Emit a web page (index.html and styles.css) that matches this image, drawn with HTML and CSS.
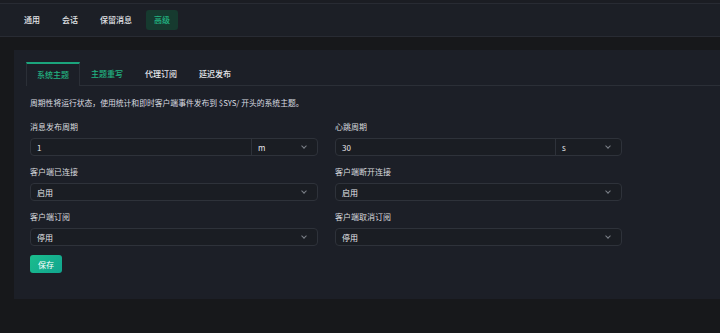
FILE: index.html
```html
<!DOCTYPE html>
<html lang="zh-CN">
<head>
  <meta charset="UTF-8">
  <meta name="viewport" content="width=device-width, initial-scale=1.0">
  <title>高级设置</title>
  <link rel="stylesheet" href="styles.css">
</head>
<body>
  <div class="top-strip"></div>
  <nav class="main-nav">
    <a class="nav-item">通用</a>
    <a class="nav-item">会话</a>
    <a class="nav-item">保留消息</a>
    <a class="nav-item active">高级</a>
  </nav>

  <div class="panel">
    <div class="tabs">
      <div class="tab active">系统主题</div>
      <div class="tab hover">主题重写</div>
      <div class="tab">代理订阅</div>
      <div class="tab">延迟发布</div>
      <div class="tab-rest"></div>
    </div>

    <div class="panel-body">
      <p class="desc">周期性将运行状态，使用统计和即时客户端事件发布到 $SYS/ 开头的系统主题。</p>

      <div class="form-grid">
        <div class="field">
          <label>消息发布周期</label>
          <div class="control split">
            <span class="value">1</span>
            <span class="unit">m<i class="chev"></i></span>
          </div>
        </div>
        <div class="field">
          <label>心跳周期</label>
          <div class="control split">
            <span class="value">30</span>
            <span class="unit">s<i class="chev"></i></span>
          </div>
        </div>
        <div class="field">
          <label>客户端已连接</label>
          <div class="control select"><span class="value">启用</span><i class="chev"></i></div>
        </div>
        <div class="field">
          <label>客户端断开连接</label>
          <div class="control select"><span class="value">启用</span><i class="chev"></i></div>
        </div>
        <div class="field">
          <label>客户端订阅</label>
          <div class="control select"><span class="value">停用</span><i class="chev"></i></div>
        </div>
        <div class="field">
          <label>客户端取消订阅</label>
          <div class="control select"><span class="value">停用</span><i class="chev"></i></div>
        </div>
      </div>

      <button class="btn-save">保存</button>
    </div>
  </div>
</body>
</html>
```

FILE: styles.css
```css
body {
  margin: 0;
  background: #17181b;
  color: #d4d6da;
  font-family: "Noto Sans CJK SC", "Noto Sans", sans-serif;
  font-size: 8px;
  overflow: hidden;
}

.top-strip {
  height: 3px;
  background: #1b1d23;
}

/* top navigation */
.main-nav {
  display: flex;
  align-items: center;
  gap: 6px;
  height: 32px;
  padding-left: 16px;
  background: #1c1f26;
  border-top: 1px solid #282b33;
  border-bottom: 1px solid #282b33;
}

.nav-item {
  padding: 0 8px;
  height: 20px;
  line-height: 20px;
  border-radius: 3px;
  color: #e2e4e8;
  font-weight: 500;
}

.nav-item.active {
  background: #163a2f;
  color: #22b381;
}

/* card */
.panel {
  margin: 13px 0 0 14px;
  width: 720px;
  height: 249px;
  background: #1c1f27;
  padding-top: 12px;
  box-sizing: border-box;
}

.tabs {
  display: flex;
  height: 24px;
  padding-left: 12px;
}

.tab {
  width: 54px;
  text-align: center;
  line-height: 23px;
  color: #e4e6ea;
  font-weight: 500;
  border-bottom: 1px solid #2b2f37;
}

.tab.active {
  color: #22b381;
  border: 1px solid #2b2f37;
  border-top: 2px solid #1ba47c;
  border-bottom: none;
  line-height: 21px;
  box-sizing: border-box;
}

.tab.hover {
  color: #22b381;
}

.tab-rest {
  flex: 1;
  border-bottom: 1px solid #2b2f37;
}

.panel-body {
  padding: 0 16px;
}

.desc {
  margin: 11px 0 12px;
  line-height: 12px;
  font-size: 7.8px;
  color: #dadce0;
}

.form-grid {
  display: grid;
  grid-template-columns: 288px 287px;
  column-gap: 17px;
  row-gap: 10px;
}

.field label {
  display: block;
  line-height: 12px;
  margin-bottom: 5px;
  color: #d8dade;
}

.control {
  display: flex;
  align-items: center;
  height: 18px;
  box-sizing: border-box;
  border: 1px solid #2e323a;
  border-radius: 4px;
  background: #1a1d23;
  color: #e6e8ec;
}

.control .value {
  flex: 1;
  padding-left: 6px;
}

.control .unit {
  display: flex;
  align-items: center;
  width: 66px;
  height: 100%;
  padding-left: 6px;
  box-sizing: border-box;
  border-left: 1px solid #2e323a;
}

.unit .chev {
  margin-left: auto;
}

.chev {
  width: 3px;
  height: 3px;
  border-right: 1px solid #7c8088;
  border-bottom: 1px solid #7c8088;
  transform: rotate(45deg);
  margin: -2px 11px 0 0;
}

.btn-save {
  margin-top: 9px;
  width: 32px;
  height: 18px;
  padding: 0;
  border: none;
  border-radius: 3px;
  background: linear-gradient(135deg, #1bbd8d, #11a58f);
  color: #fff;
  font-family: inherit;
  font-size: 8px;
}
```
